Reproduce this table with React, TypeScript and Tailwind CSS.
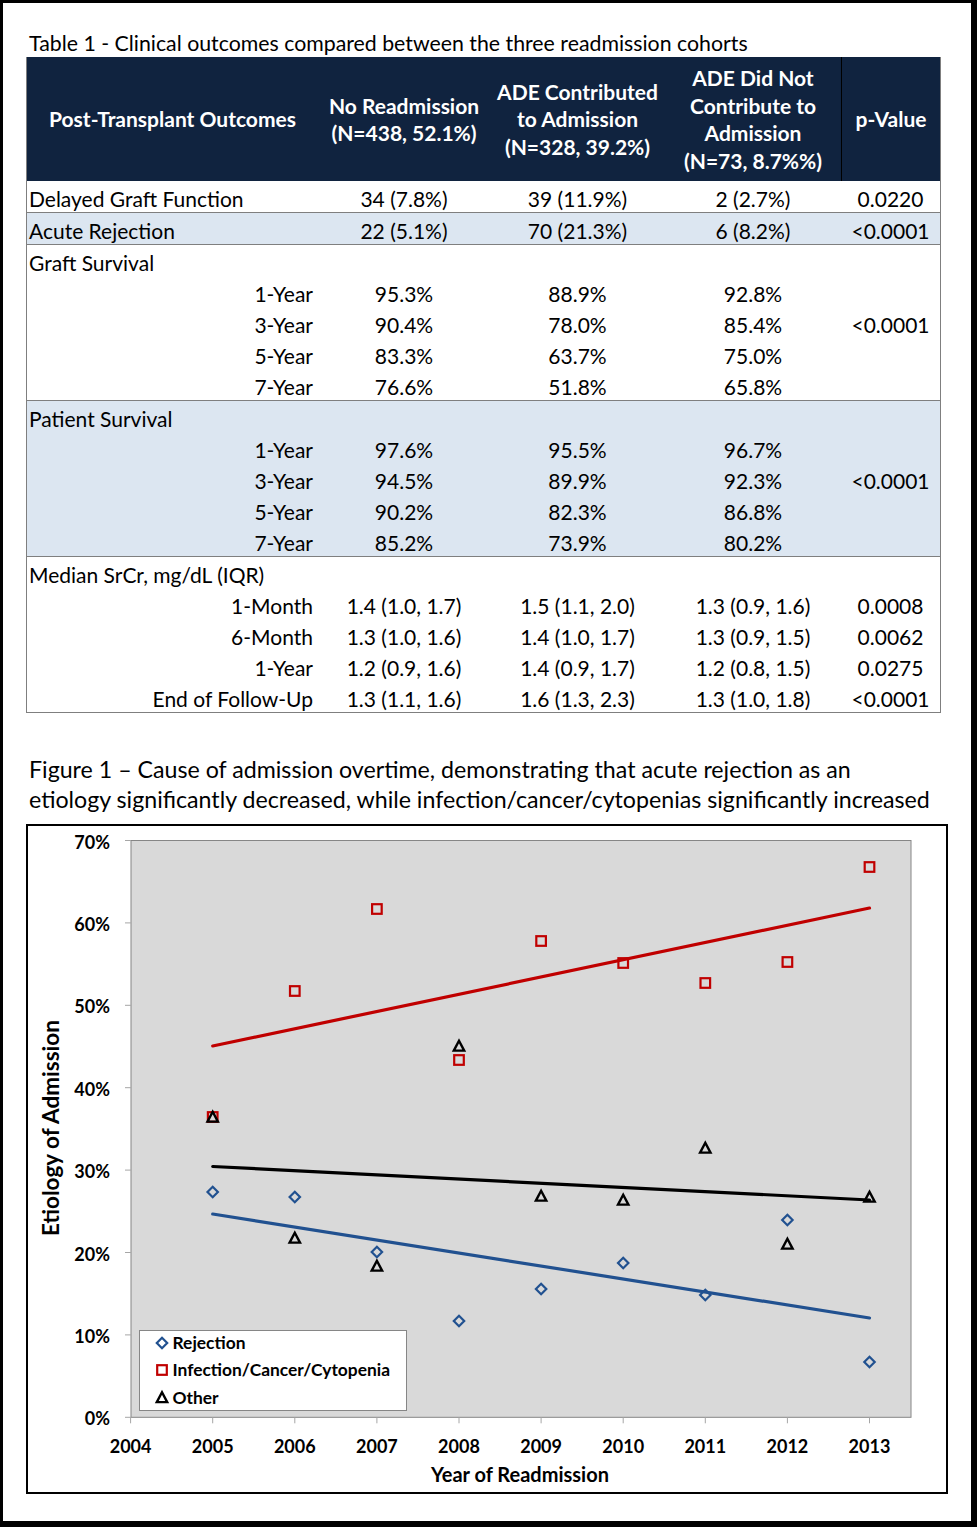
import React from 'react';

// column template shared by header and body rows
const cols = 'grid grid-cols-[291px_172px_175px_176px_99px]';

type Line = { label: string; sub?: boolean; v?: [string, string, string]; p?: string };

const groups: { bg: string; rows: Line[] }[] = [
  { bg: 'bg-white', rows: [{ label: 'Delayed Graft Function', v: ['34 (7.8%)', '39 (11.9%)', '2 (2.7%)'], p: '0.0220' }] },
  { bg: 'bg-[#dce6f1]', rows: [{ label: 'Acute Rejection', v: ['22 (5.1%)', '70 (21.3%)', '6 (8.2%)'], p: '<0.0001' }] },
  {
    bg: 'bg-white',
    rows: [
      { label: 'Graft Survival' },
      { label: '1-Year', sub: true, v: ['95.3%', '88.9%', '92.8%'] },
      { label: '3-Year', sub: true, v: ['90.4%', '78.0%', '85.4%'], p: '<0.0001' },
      { label: '5-Year', sub: true, v: ['83.3%', '63.7%', '75.0%'] },
      { label: '7-Year', sub: true, v: ['76.6%', '51.8%', '65.8%'] },
    ],
  },
  {
    bg: 'bg-[#dce6f1]',
    rows: [
      { label: 'Patient Survival' },
      { label: '1-Year', sub: true, v: ['97.6%', '95.5%', '96.7%'] },
      { label: '3-Year', sub: true, v: ['94.5%', '89.9%', '92.3%'], p: '<0.0001' },
      { label: '5-Year', sub: true, v: ['90.2%', '82.3%', '86.8%'] },
      { label: '7-Year', sub: true, v: ['85.2%', '73.9%', '80.2%'] },
    ],
  },
  {
    bg: 'bg-white',
    rows: [
      { label: 'Median SrCr, mg/dL (IQR)' },
      { label: '1-Month', sub: true, v: ['1.4 (1.0, 1.7)', '1.5 (1.1, 2.0)', '1.3 (0.9, 1.6)'], p: '0.0008' },
      { label: '6-Month', sub: true, v: ['1.3 (1.0, 1.6)', '1.4 (1.0, 1.7)', '1.3 (0.9, 1.5)'], p: '0.0062' },
      { label: '1-Year', sub: true, v: ['1.2 (0.9, 1.6)', '1.4 (0.9, 1.7)', '1.2 (0.8, 1.5)'], p: '0.0275' },
      { label: 'End of Follow-Up', sub: true, v: ['1.3 (1.1, 1.6)', '1.6 (1.3, 2.3)', '1.3 (1.0, 1.8)'], p: '<0.0001' },
    ],
  },
];

const OutcomesTable: React.FC = () => (
  <div className="w-[915px] border-x border-b border-[#7f7f7f] text-[21px] text-black">
    <div className={`${cols} h-[124px] bg-[#10233f] text-white font-bold leading-[27.5px] text-center`}>
      <div className="flex items-center justify-center">Post-Transplant Outcomes</div>
      <div className="flex items-center justify-center">No Readmission<br />(N=438, 52.1%)</div>
      <div className="flex items-center justify-center">ADE Contributed<br />to Admission<br />(N=328, 39.2%)</div>
      <div className="flex items-center justify-center">ADE Did Not<br />Contribute to<br />Admission<br />(N=73, 8.7%%)</div>
      <div className="flex items-center justify-center border-l border-black">p-Value</div>
    </div>
    {groups.map((g, gi) => (
      <div key={gi} className={`${g.bg} ${gi > 0 ? 'border-t border-[#7f7f7f]' : ''}`}>
        {g.rows.map((r, ri) => (
          <div key={ri} className={`${cols} h-[31px] pt-[4px] leading-[27px] whitespace-nowrap`}>
            <div className={r.sub ? 'text-right pr-[5px]' : 'pl-[2px]'}>{r.label}</div>
            <div className="text-center">{r.v?.[0]}</div>
            <div className="text-center">{r.v?.[1]}</div>
            <div className="text-center">{r.v?.[2]}</div>
            <div className="text-center">{r.p}</div>
          </div>
        ))}
      </div>
    ))}
  </div>
);

// chart geometry, in page pixels
const X = (yr: number) => 212.7 + (yr - 2005) * 82.1;
const Y0 = 1417.3;
const STEP = 82.4;
const BLUE = '#215190';
const RED = '#c00000';

const rejection: [number, number][] = [[2005, 1192], [2006, 1197], [2007, 1252], [2008, 1321], [2009, 1289], [2010, 1263], [2011, 1295], [2012, 1220], [2013, 1362]];
const infection: [number, number][] = [[2005, 1117], [2006, 991], [2007, 909], [2008, 1060], [2009, 941], [2010, 963], [2011, 983], [2012, 962], [2013, 867]];
const other: [number, number][] = [[2005, 1117], [2006, 1238], [2007, 1266], [2008, 1046], [2009, 1196], [2010, 1200], [2011, 1148], [2012, 1244], [2013, 1197]];

const Diamond = ({ x, y }: { x: number; y: number }) => (
  <polygon points={`${x},${y - 5.2} ${x + 5.2},${y} ${x},${y + 5.2} ${x - 5.2},${y}`} fill="none" stroke={BLUE} strokeWidth={2.2} />
);
const Square = ({ x, y }: { x: number; y: number }) => (
  <rect x={x - 4.8} y={y - 4.8} width={9.6} height={9.6} fill="none" stroke={RED} strokeWidth={2.2} />
);
const Triangle = ({ x, y }: { x: number; y: number }) => (
  <polygon points={`${x},${y - 5.2} ${x + 5.2},${y + 4.6} ${x - 5.2},${y + 4.6}`} fill="none" stroke="#000" strokeWidth={2.4} />
);

const Chart: React.FC = () => (
  <div className="w-[922px] h-[670px] border-2 border-black mt-[10px]">
    <svg width={918} height={666} viewBox="28 826 918 666" fontFamily="Lato, sans-serif" fontWeight={700}>
      <rect x={131} y={840.5} width={780} height={576.8} fill="#d9d9d9" stroke="#868686" strokeWidth={1} />
      {Array.from({ length: 8 }, (_, i) => {
        const y = Y0 - i * STEP;
        return (
          <g key={i}>
            <line x1={125} y1={y} x2={131} y2={y} stroke="#a6a6a6" />
            <text x={110} y={y + 8} textAnchor="end" fontSize={18} fill="#000">{i * 10}%</text>
          </g>
        );
      })}
      {Array.from({ length: 10 }, (_, i) => {
        const x = X(2004 + i);
        return (
          <g key={i}>
            <line x1={x} y1={Y0} x2={x} y2={Y0 + 6} stroke="#a6a6a6" />
            <text x={x} y={1453} textAnchor="middle" fontSize={18} fill="#000">{2004 + i}</text>
          </g>
        );
      })}
      <text x={520} y={1482} textAnchor="middle" fontSize={20} fill="#000">Year of Readmission</text>
      <text transform="translate(59,1128) rotate(-90)" textAnchor="middle" fontSize={22.5} fill="#000">Etiology of Admission</text>

      {rejection.map(([yr, y]) => <Diamond key={yr} x={X(yr)} y={y} />)}
      {infection.map(([yr, y]) => <Square key={yr} x={X(yr)} y={y} />)}
      {other.map(([yr, y]) => <Triangle key={yr} x={X(yr)} y={y} />)}

      <line x1={212.7} y1={1046} x2={869.5} y2={908} stroke={RED} strokeWidth={3.2} strokeLinecap="round" />
      <line x1={212.7} y1={1166.5} x2={869.5} y2={1200} stroke="#000" strokeWidth={3.2} strokeLinecap="round" />
      <line x1={212.7} y1={1214} x2={869.5} y2={1318} stroke={BLUE} strokeWidth={3.2} strokeLinecap="round" />

      <rect x={139.5} y={1330.5} width={267} height={80} fill="#fff" stroke="#868686" />
      <Diamond x={162} y={1343} />
      <Square x={162} y={1370} />
      <Triangle x={162} y={1397.5} />
      <text x={172.5} y={1349} fontSize={17.4} fill="#000">Rejection</text>
      <text x={172.5} y={1376} fontSize={17.4} fill="#000">Infection/Cancer/Cytopenia</text>
      <text x={172.5} y={1403.5} fontSize={17.4} fill="#000">Other</text>
    </svg>
  </div>
);

export default function App() {
  return (
    <div className="w-[977px] h-[1527px] bg-white border-t-[3px] border-l-[3px] border-r-[6px] border-b-[6px] border-black pt-[28px] pl-[23px] font-['Lato',sans-serif] text-black">
      <div className="text-[21.3px] leading-[24px] pl-[3px] whitespace-nowrap">
        Table 1 - Clinical outcomes compared between the three readmission cohorts
      </div>
      <div className="mt-[2px]">
        <OutcomesTable />
      </div>
      <div className="mt-[41px] pl-[3px] text-[23.2px] leading-[30px] whitespace-nowrap">
        Figure 1 – Cause of admission overtime, demonstrating that acute rejection as an
        <br />
        etiology significantly decreased, while infection/cancer/cytopenias significantly increased
      </div>
      <Chart />
    </div>
  );
}
